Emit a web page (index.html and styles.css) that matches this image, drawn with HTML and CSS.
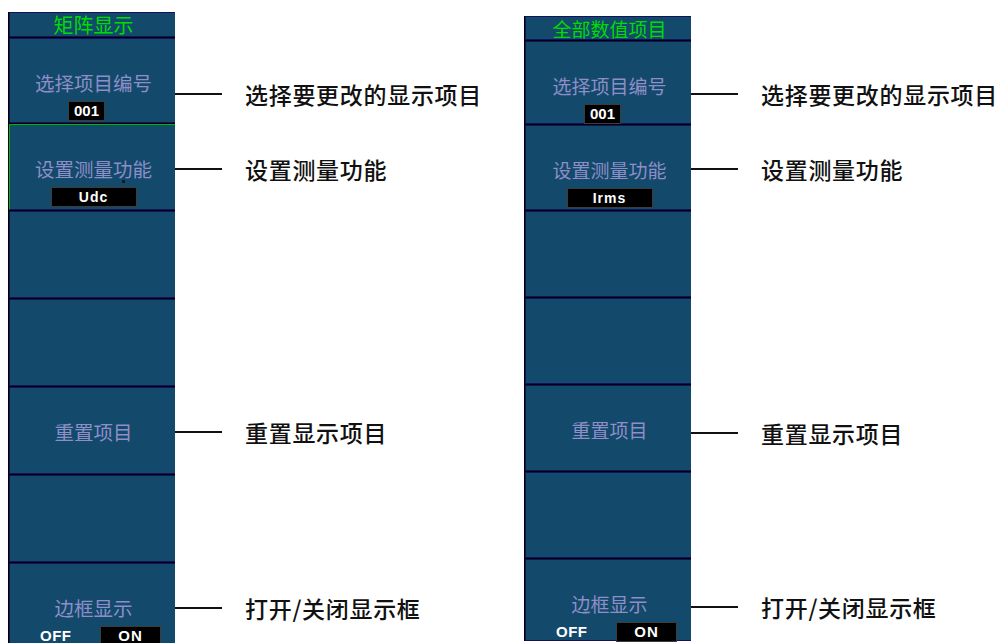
FILE: index.html
```html
<!DOCTYPE html>
<html lang="zh-CN">
<head>
  <meta charset="UTF-8" />
  <meta name="viewport" content="width=device-width, initial-scale=1.0"/>
  <title>矩阵显示 / 全部数值项目</title>
  <link rel="stylesheet" href="styles.css">
</head>
<body>
  <div class="page">

    <!-- 左：矩阵显示 -->
    <section class="figure figure-a">
      <div class="panel">
        <div class="panel-title">矩阵显示</div>
        <div class="key">
          <span class="key-label">选择项目编号</span>
          <span class="key-value key-num">001</span>
        </div>
        <div class="key key-active">
          <span class="key-label">设置测量功能</span>
          <span class="key-value key-wide">Udc</span>
          <span class="cursor-dot"></span>
        </div>
        <div class="key"></div>
        <div class="key"></div>
        <div class="key"><span class="key-label">重置项目</span></div>
        <div class="key"></div>
        <div class="key">
          <span class="key-label">边框显示</span>
          <div class="key-toggle">
            <span class="toggle-off">OFF</span>
            <span class="key-value toggle-on">ON</span>
          </div>
        </div>
      </div>
      <div class="notes">
        <div></div>
        <div class="note-row note-first"><div class="note"><i class="note-line"></i><span>选择要更改的显示项目</span></div></div>
        <div class="note-row note-second"><div class="note"><i class="note-line"></i><span>设置测量功能</span></div></div>
        <div class="note-row"></div>
        <div class="note-row"></div>
        <div class="note-row"><div class="note"><i class="note-line"></i><span>重置显示项目</span></div></div>
        <div class="note-row"></div>
        <div class="note-row"><div class="note"><i class="note-line"></i><span>打开/关闭显示框</span></div></div>
      </div>
    </section>

    <!-- 右：全部数值项目 -->
    <section class="figure figure-b">
      <div class="panel">
        <div class="panel-title">全部数值项目</div>
        <div class="key">
          <span class="key-label">选择项目编号</span>
          <span class="key-value key-num">001</span>
        </div>
        <div class="key">
          <span class="key-label">设置测量功能</span>
          <span class="key-value key-wide">Irms</span>
        </div>
        <div class="key"></div>
        <div class="key"></div>
        <div class="key"><span class="key-label">重置项目</span></div>
        <div class="key"></div>
        <div class="key">
          <span class="key-label">边框显示</span>
          <div class="key-toggle">
            <span class="toggle-off">OFF</span>
            <span class="key-value toggle-on">ON</span>
          </div>
        </div>
      </div>
      <div class="notes">
        <div></div>
        <div class="note-row note-first"><div class="note"><i class="note-line"></i><span>选择要更改的显示项目</span></div></div>
        <div class="note-row note-second"><div class="note"><i class="note-line"></i><span>设置测量功能</span></div></div>
        <div class="note-row"></div>
        <div class="note-row"></div>
        <div class="note-row"><div class="note"><i class="note-line"></i><span>重置显示项目</span></div></div>
        <div class="note-row"></div>
        <div class="note-row"><div class="note"><i class="note-line"></i><span>打开/关闭显示框</span></div></div>
      </div>
    </section>

  </div>
</body>
</html>
```

FILE: styles.css
```css
html,body{margin:0;padding:0;overflow:hidden;background:#fff;}
body{font-family:"Noto Sans CJK SC","Noto Sans",sans-serif;}
.page{display:flex;align-items:flex-start;height:643px;padding-left:8px;}

/* 每组 = 软键面板 + 右侧说明，两列共用同一组行高 */
.figure{display:flex;}
.figure-a{width:516px;margin-top:12px;--rows:26px 86px 87px 88px 88px 88px 88px 88px;--note-top:33px;--note-first:44px;--note-second:33px;}
.figure-b{margin-top:16px;--rows:25px 84px 86px 87px 87px 87px 87px 82px;--note-top:36px;--note-first:41px;--note-second:32px;}

/* 面板右边被截掉，所以键没有右边框 */
.panel{width:167px;flex:0 0 167px;background:#000;display:grid;grid-template-rows:var(--rows);padding-left:1px;box-sizing:border-box;}
.panel-title,.key{box-sizing:border-box;border:1px solid #12125e;border-right:0;background:#13496a;margin-bottom:1px;padding-left:2px;}
.panel-title{color:#00dc00;font-size:20px;line-height:24px;text-align:center;}
.figure-b .panel-title{font-size:19px;line-height:23px;}
.key{display:flex;flex-direction:column;align-items:center;padding-top:33px;position:relative;}
.panel .key:last-child{margin-bottom:0;}
.key-active{border-top-color:#00b400;border-left-color:#00b400;}
.key-label{color:#8e8ec8;font-size:19.5px;line-height:22px;height:22px;}
.figure-b .key-label{font-size:19px;}

.key-value{background:#000;border:1px solid #3c3c3c;color:#fff;font-family:"Liberation Sans",Arial,sans-serif;font-weight:bold;font-size:14px;line-height:18px;text-align:center;box-sizing:border-box;height:20px;margin-top:7px;}
.key-num{width:37px;margin-right:14px;font-size:15px;}
.key-wide{width:86px;letter-spacing:1px;}

.key-toggle{display:flex;align-self:stretch;align-items:flex-start;padding-left:28px;margin-top:7px;}
.toggle-off{color:#fff;font-family:"Liberation Sans",Arial,sans-serif;font-weight:bold;font-size:15px;line-height:20px;letter-spacing:0.5px;width:60px;}
.toggle-on{width:61px;margin-top:0;font-size:15px;letter-spacing:1px;}

.cursor-dot{position:absolute;left:112px;top:55px;width:3px;height:3px;background:#1a1a1a;}

.notes{display:grid;grid-template-rows:var(--rows);}
.note{display:flex;align-items:center;height:24px;margin-top:var(--note-top);}
.note-first .note{margin-top:var(--note-first);}
.note-second .note{margin-top:var(--note-second);}
.note-line{display:block;width:47px;height:2px;background:#111;margin-right:23px;}
.note span{font-size:23px;line-height:24px;font-weight:500;letter-spacing:0.7px;color:#111;white-space:nowrap;}
```
